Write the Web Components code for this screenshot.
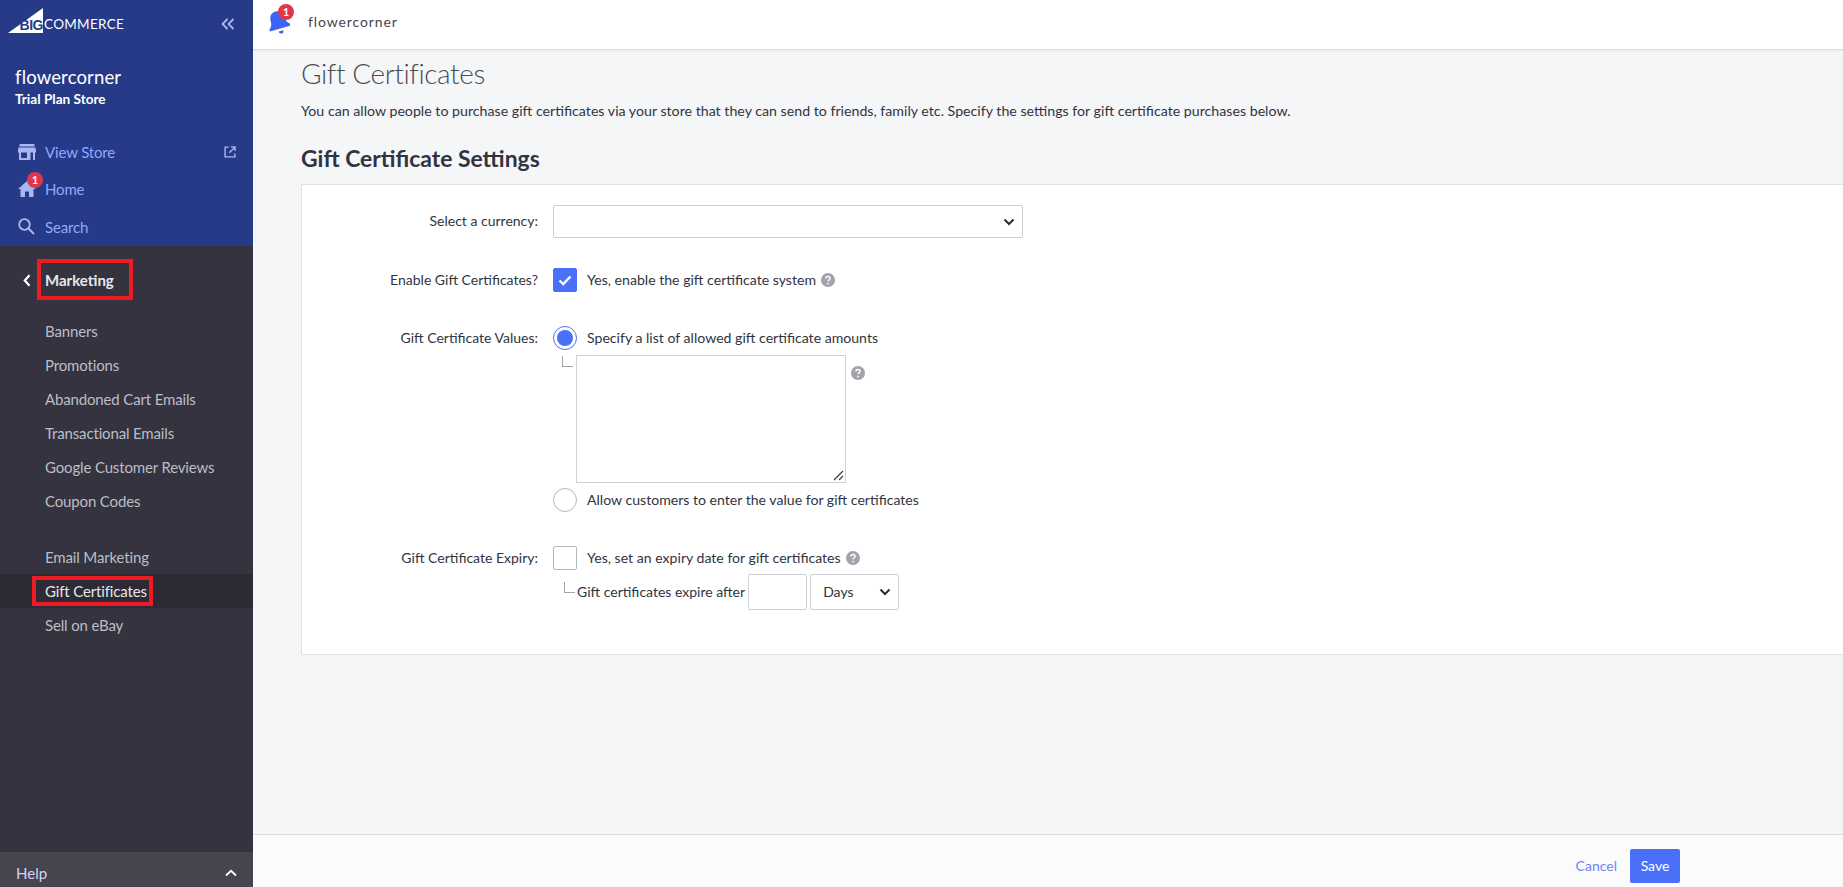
<!DOCTYPE html>
<html>
<head>
<meta charset="utf-8">
<title>Gift Certificates</title>
<style>
  html, body { margin: 0; height: 100%; overflow: hidden; }
  body { font-family: "Lato", "Noto Sans", sans-serif; color: #313440; }
</style>
</head>
<body>
<bc-app>
  <bc-sidebar slot="sidebar" store="flowercorner" plan="Trial Plan Store">
    <bc-sub-link>Banners</bc-sub-link>
    <bc-sub-link>Promotions</bc-sub-link>
    <bc-sub-link>Abandoned Cart Emails</bc-sub-link>
    <bc-sub-link>Transactional Emails</bc-sub-link>
    <bc-sub-link>Google Customer Reviews</bc-sub-link>
    <bc-sub-link>Coupon Codes</bc-sub-link>
    <bc-sub-link class="spaced">Email Marketing</bc-sub-link>
    <bc-sub-link active>Gift Certificates</bc-sub-link>
    <bc-sub-link>Sell on eBay</bc-sub-link>
  </bc-sidebar>
  <bc-topbar slot="topbar" store="flowercorner"></bc-topbar>
  <bc-settings-page slot="main"></bc-settings-page>
  <bc-footer slot="footer"></bc-footer>
</bc-app>

<script>
const HELP_ICON = `<svg width="14" height="14" viewBox="0 0 14 14"><circle cx="7" cy="7" r="7" fill="#a2a3ab"/><path d="M4.9 5.4c0-1.2 1-1.9 2.1-1.9s2.1.7 2.1 1.8c0 1.5-2 1.5-2 3" fill="none" stroke="#fff" stroke-width="1.5"/><circle cx="7" cy="10.6" r=".95" fill="#fff"/></svg>`;
const CHEVRON = `<svg width="12" height="8" viewBox="0 0 12 8"><path d="M1.5 1.5 6 6l4.5-4.5" fill="none" stroke="#2b2d36" stroke-width="2"/></svg>`;

class BcApp extends HTMLElement {
  constructor() {
    super();
    this.attachShadow({ mode: 'open' }).innerHTML = `
      <style>
        :host { display: grid; grid-template-columns: 253px 1fr; grid-template-rows: 50px 1fr 53px; height: 887px; width: 1843px; background: #f5f6f8; overflow: hidden; }
        .side { grid-row: 1 / 4; display: block; min-height: 0; }
      </style>
      <div class="side"><slot name="sidebar"></slot></div>
      <slot name="topbar"></slot>
      <slot name="main"></slot>
      <slot name="footer"></slot>`;
  }
}

class BcNavLink extends HTMLElement {
  constructor() {
    super();
    this.attachShadow({ mode: 'open' }).innerHTML = `
      <style>
        :host { display: flex; align-items: center; height: 37.5px; padding-left: 18px; padding-right: 17px; color: #8ea8ff; font-size: 15px; letter-spacing: -.15px; }
        .icon { width: 27px; display: flex; position: relative; }
        .label { flex: 1; }
      </style>
      <span class="icon"><slot name="icon"></slot></span>
      <span class="label"><slot></slot></span>
      <slot name="end"></slot>`;
  }
}

class BcSubLink extends HTMLElement {
  constructor() {
    super();
    this.attachShadow({ mode: 'open' }).innerHTML = `
      <style>
        :host { display: flex; align-items: center; height: 34px; padding-left: 45px; color: #bdbdc6; font-size: 15px; letter-spacing: -.15px; }
        :host([active]) { background: #2c2b35; color: #e6e6ea; }
        :host(.spaced) { margin-top: 22px; }
        .text { position: relative; }
        :host([active]) .text::after { content: ""; position: absolute; left: -13px; right: -6px; top: -6px; bottom: -6px; border: 4px solid #ed1c24; box-sizing: border-box; }
      </style>
      <span class="text"><slot></slot></span>`;
  }
}

class BcSidebar extends HTMLElement {
  constructor() {
    super();
    const store = this.getAttribute('store');
    const plan = this.getAttribute('plan');
    this.attachShadow({ mode: 'open' }).innerHTML = `
      <style>
        :host { display: flex; flex-direction: column; height: 887px; background: #34333f; }
        .blue { background: #263a87; height: 246px; display: flex; flex-direction: column; flex: none; }
        .logo-row { display: flex; align-items: flex-start; justify-content: space-between; padding: 8px 18px 0 8px; height: 52px; box-sizing: border-box; flex: none; }
        .logo { display: flex; align-items: flex-end; height: 26px; }
        .tri { position: relative; width: 35px; height: 26px; flex: none; }
        .tri svg { display: block; }
        .big { position: absolute; right: 0; bottom: 2px; font: 700 14px/13px "Liberation Sans", sans-serif; color: #263a87; letter-spacing: -.5px; }
        .commerce { color: #fff; font: 400 13.5px/13px "Lato", sans-serif; letter-spacing: .3px; margin: 0 0 3px 1px; }
        .collapse { margin-top: 10px; }
        .store { padding: 0 15px; color: #fff; height: 69px; flex: none; }
        .store h1 { margin: 13px 0 0; font: 400 18.5px/24px "Lato", sans-serif; letter-spacing: .15px; }
        .store p { margin: 0; font: 700 13.6px/20px "Lato", sans-serif; }
        .links { display: flex; flex-direction: column; margin-top: 12px; }
        .badge { position: absolute; left: 9px; top: -9px; width: 16px; height: 16px; border-radius: 50%; background: #e0364c; color: #fff; font: 700 10.5px/16px "Lato", sans-serif; text-align: center; }
        .back { display: flex; align-items: center; height: 68px; padding-left: 23px; flex: none; color: #e8e8ec; font: 700 15px "Lato", sans-serif; box-sizing: border-box; }
        .back span { position: relative; margin-left: 14px; }
        .back span::after { content: ""; position: absolute; left: -8px; right: -19px; top: -12px; bottom: -11px; border: 4px solid #ed1c24; box-sizing: border-box; }
        .subs { flex: 1; }
        .help { height: 35px; flex: none; background: #45444f; color: #d5d6f0; display: flex; align-items: center; justify-content: space-between; padding: 7px 16px 0; box-sizing: border-box; font-size: 15px; }
      </style>
      <div class="blue">
        <div class="logo-row">
          <div class="logo">
            <div class="tri">
              <svg width="35" height="26" viewBox="0 0 35 26"><path d="M0 25 35 0v25z" fill="#fff"/></svg>
              <span class="big">BIG</span>
            </div>
            <span class="commerce">COMMERCE</span>
          </div>
          <svg class="collapse" width="14" height="12" viewBox="0 0 14 12"><path d="M6.5 1 1.500 6l5 5M12.500 1l-5 5 5 5" fill="none" stroke="#a9b8f2" stroke-width="1.8"/></svg>
        </div>
        <div class="store"><h1>${store}</h1><p>${plan}</p></div>
        <div class="links">
          <bc-nav-link>
            <svg slot="icon" width="18" height="16" viewBox="0 0 18 16"><path d="M1.500 0h15v2.500h-15zM.5 3.500h17l.5 3.200v1.800h-1V16h-16V8.500H0V6.700zM3 8.500V14h6V8.500zm9.500 0V16H15V8.500z" fill="#a9b8f2" fill-rule="evenodd"/></svg>
            View Store
            <svg slot="end" width="12" height="12" viewBox="0 0 13 13"><path d="M5 1.200H1.200v10.600h10.600V8M7.500 1H12v4.500M12 1 5.800 7.200" fill="none" stroke="#a9b8f2" stroke-width="1.500"/></svg>
          </bc-nav-link>
          <bc-nav-link>
            <svg slot="icon" width="18" height="16" viewBox="0 0 18 16"><path d="M9 0 18 8h-2.500v8H11v-5.500H7V16H2.500V8H0z" fill="#a9b8f2"/></svg>
            <span slot="icon" class="badge">1</span>
            Home
          </bc-nav-link>
          <bc-nav-link>
            <svg slot="icon" width="17" height="17" viewBox="0 0 17 17"><circle cx="6.500" cy="6.500" r="5.300" fill="none" stroke="#a9b8f2" stroke-width="1.800"/><path d="M10.500 10.500 16 16" stroke="#a9b8f2" stroke-width="2"/></svg>
            Search
          </bc-nav-link>
        </div>
      </div>
      <div class="back">
        <svg width="8" height="13" viewBox="0 0 8 13"><path d="M6.500 1.200 1.800 6.500l4.700 5.300" fill="none" stroke="#fff" stroke-width="2.200"/></svg>
        <span>Marketing</span>
      </div>
      <div class="subs"><slot></slot></div>
      <div class="help"><span>Help</span>
        <svg width="12" height="8" viewBox="0 0 12 8"><path d="M1 6.500 6 1.800l5 4.700" fill="none" stroke="#fff" stroke-width="1.800"/></svg>
      </div>`;
  }
}

class BcTopbar extends HTMLElement {
  constructor() {
    super();
    this.attachShadow({ mode: 'open' }).innerHTML = `
      <style>
        :host { display: flex; align-items: center; height: 49px; background: #fff; border-bottom: 1px solid #dcdde2; box-shadow: 0 1px 3px rgba(49,52,64,.08); padding-left: 14px; position: relative; }
        .bell { position: relative; width: 23px; height: 26px; margin-top: -3px; }
        .badge { position: absolute; left: 11px; top: -6px; width: 16px; height: 16px; border-radius: 50%; background: #e0364c; color: #fff; font: 700 10.5px/16px "Lato", sans-serif; text-align: center; }
        .name { margin-left: 18px; font-size: 14px; letter-spacing: .9px; color: #45464f; margin-top: -6px; }
      </style>
      <div class="bell">
        <svg width="23" height="26" viewBox="1.500 2.500 19 20.500"><g transform="rotate(-16 11 12)"><path d="M11 3c4 0 6 2.800 6 6.500 0 3.500 1.200 5 3 6.500v1.500H2V16c1.800-1.500 3-3 3-6.500C5 5.800 7 3 11 3z" fill="#3c64f4"/><path d="M9 19.500h4c0 1.400-.9 2.300-2 2.300s-2-.9-2-2.300z" fill="#3c64f4"/></g></svg>
        <span class="badge">1</span>
      </div>
      <span class="name">${this.getAttribute('store')}</span>`;
  }
}

class BcFormRow extends HTMLElement {
  constructor() {
    super();
    this.attachShadow({ mode: 'open' }).innerHTML = `
      <style>
        :host { display: grid; grid-template-columns: 236px 1fr; column-gap: 15px; font-size: 14px; }
        .label { text-align: right; line-height: 24px; padding-top: var(--label-top, 0); color: #313440; }
        .control { min-width: 0; }
      </style>
      <div class="label"><slot name="label"></slot></div>
      <div class="control"><slot></slot></div>`;
  }
}

class BcCheck extends HTMLElement {
  constructor() {
    super();
    const round = this.getAttribute('type') === 'radio';
    const checked = this.hasAttribute('checked');
    let mark = '';
    if (checked && round) mark = '<span class="dot"></span>';
    if (checked && !round) mark = '<svg width="14" height="11" viewBox="0 0 14 11"><path d="M1.500 5.500 5.200 9l7.300-7.500" fill="none" stroke="#fff" stroke-width="2.400"/></svg>';
    this.attachShadow({ mode: 'open' }).innerHTML = `
      <style>
        :host { display: flex; align-items: center; font-size: 14.1px; line-height: 24px; color: #313440; }
        .box { width: 24px; height: 24px; box-sizing: border-box; border: 1px solid #b4b5bd; border-radius: 2px; background: #fff; display: flex; align-items: center; justify-content: center; margin-right: 10px; flex: none; }
        :host([checked]) .box { background: #4a6ff8; border-color: #4a6ff8; }
        :host([type=radio]) .box { border-radius: 50%; }
        :host([type=radio][checked]) .box { background: #fff; }
        .dot { width: 16px; height: 16px; border-radius: 50%; background: #4a6ff8; }
        .help { display: inline-flex; margin-left: 5px; }
      </style>
      <span class="box">${mark}</span>
      <span><slot></slot></span>
      ${this.hasAttribute('help') ? `<span class="help">${HELP_ICON}</span>` : ''}`;
  }
}

class BcSelect extends HTMLElement {
  constructor() {
    super();
    this.attachShadow({ mode: 'open' }).innerHTML = `
      <style>
        :host { display: flex; align-items: center; justify-content: space-between; box-sizing: border-box; background: #fff; border: 1px solid #cfd0d6; border-radius: 2px; padding: 0 7px 0 12px; font-size: 14px; color: #313440; }
      </style>
      <span><slot></slot></span>${CHEVRON}`;
  }
}

class BcSettingsPage extends HTMLElement {
  constructor() {
    super();
    this.attachShadow({ mode: 'open' }).innerHTML = `
      <style>
        :host { display: block; padding: 0 0 0 48px; min-width: 0; overflow: hidden; }
        h1 { margin: 0; font: 300 28px/40px "Lato", sans-serif; letter-spacing: -.4px; color: #4a4b55; height: 40px; padding-top: 3px; }
        .intro { margin: 8px 0 0; font-size: 14.2px; line-height: 20px; color: #313440; }
        h2 { margin: 22px 0 0; font: 700 22.9px/30px "Lato", sans-serif; color: #313440; }
        .card { margin-top: 11px; background: #fff; border: 1px solid #e0e1e6; border-right: 0; height: 471px; box-sizing: border-box; padding-top: 20px; }
        .tree { display: flex; align-items: flex-start; margin-top: 5px; }
        .elbow { width: 11px; height: 11px; border-left: 1px solid #a2a3ab; border-bottom: 1px solid #a2a3ab; margin: 1px 3px 0 9px; flex: none; box-sizing: border-box; }
        .textarea { position: relative; width: 270px; height: 128px; background: #fff; border: 1px solid #cfd0d6; box-sizing: border-box; flex: none; }
        .grip { position: absolute; right: 1px; bottom: 1px; }
        .ta-help { display: inline-flex; margin: 11px 0 0 5px; }
        .expire { display: flex; align-items: center; margin-top: 3px; height: 37px; font-size: 14px; }
        .elbow2 { width: 11px; height: 11px; border-left: 1px solid #a2a3ab; border-bottom: 1px solid #a2a3ab; margin: -8px 2px 0 11px; box-sizing: border-box; flex: none; }
        .num { width: 59px; height: 36px; background: #fff; border: 1px solid #cfd0d6; border-radius: 2px; box-sizing: border-box; margin-left: 3px; }
      </style>
      <h1>Gift Certificates</h1>
      <p class="intro">You can allow people to purchase gift certificates via your store that they can send to friends, family etc. Specify the settings for gift certificate purchases below.</p>
      <h2>Gift Certificate Settings</h2>
      <div class="card">
        <bc-form-row style="--label-top:4px">
          <span slot="label">Select a currency:</span>
          <bc-select style="width:470px;height:33px"></bc-select>
        </bc-form-row>
        <bc-form-row style="margin-top:30px">
          <span slot="label">Enable Gift Certificates?</span>
          <bc-check checked help>Yes, enable the gift certificate system</bc-check>
        </bc-form-row>
        <bc-form-row style="margin-top:34px">
          <span slot="label">Gift Certificate Values:</span>
          <bc-check type="radio" checked>Specify a list of allowed gift certificate amounts</bc-check>
          <div class="tree">
            <span class="elbow"></span>
            <div class="textarea">
              <svg class="grip" width="12" height="12" viewBox="0 0 12 12"><path d="M2 11 11 2M7 11l4-4" stroke="#3a3a42" stroke-width="1.200"/></svg>
            </div>
            <span class="ta-help">${HELP_ICON}</span>
          </div>
          <bc-check type="radio" style="margin-top:5px">Allow customers to enter the value for gift certificates</bc-check>
        </bc-form-row>
        <bc-form-row style="margin-top:34px">
          <span slot="label">Gift Certificate Expiry:</span>
          <bc-check help>Yes, set an expiry date for gift certificates</bc-check>
          <div class="expire">
            <span class="elbow2"></span>
            <span>Gift certificates expire after</span>
            <span class="num"></span>
            <bc-select style="width:89px;height:36px;margin-left:3px">Days</bc-select>
          </div>
        </bc-form-row>
      </div>`;
  }
}

class BcFooter extends HTMLElement {
  constructor() {
    super();
    this.attachShadow({ mode: 'open' }).innerHTML = `
      <style>
        :host { display: flex; align-items: center; justify-content: flex-end; height: 53px; box-sizing: border-box; background: #fbfbfc; border-top: 1px solid #dcdde2; padding: 9px 163px 0 0; font-size: 14px; }
        .cancel { color: #6b86f6; margin-right: 13px; }
        .save { width: 50px; height: 34px; background: #4a6ff8; color: #fff; border-radius: 2px; display: flex; align-items: center; justify-content: center; }
      </style>
      <span class="cancel">Cancel</span>
      <span class="save">Save</span>`;
  }
}

customElements.define('bc-nav-link', BcNavLink);
customElements.define('bc-sub-link', BcSubLink);
customElements.define('bc-sidebar', BcSidebar);
customElements.define('bc-topbar', BcTopbar);
customElements.define('bc-form-row', BcFormRow);
customElements.define('bc-check', BcCheck);
customElements.define('bc-select', BcSelect);
customElements.define('bc-settings-page', BcSettingsPage);
customElements.define('bc-footer', BcFooter);
customElements.define('bc-app', BcApp);
</script>
</body>
</html>
